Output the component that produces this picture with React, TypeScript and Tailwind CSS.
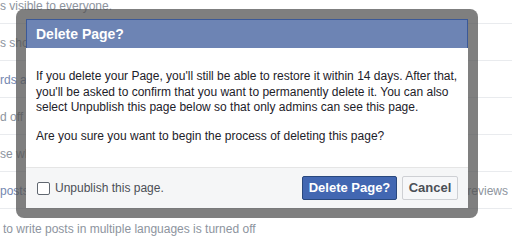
import { useState } from 'react'

const ROW_CLS = "flex h-[37px] shrink-0 items-center justify-between border-b border-[#e9ebee] pt-[2px]"

export default function App() {
  const [unpublish, setUnpublish] = useState(false)

  return (
    <div className="relative h-[241px] w-[512px] overflow-hidden bg-white font-['Liberation_Sans',Arial,sans-serif] text-[12px]">
      {/* settings list behind the dialog */}
      <div className="mt-[-13px] flex flex-col">
        <div className={ROW_CLS}>
          <span className="text-[#8d949e]">s visible to everyone.</span>
        </div>
        <div className={ROW_CLS}>
          <span className="text-[#8d949e]">s shown</span>
        </div>
        <div className={ROW_CLS}>
          <span className="text-[#7487b0]">rds and</span>
        </div>
        <div className={ROW_CLS}>
          <span className="text-[#8d949e]">d off</span>
        </div>
        <div className={ROW_CLS}>
          <span className="text-[#8d949e]">se who</span>
        </div>
        <div className={ROW_CLS}>
          <span className="text-[#7487b0]">posts</span>
          <span className="mr-[4px] text-[#8d949e]">reviews</span>
        </div>
        <div className="flex h-[37px] items-center pl-[3px] pt-[2px]">
          <span className="text-[#8d949e]">to write posts in multiple languages is turned off</span>
        </div>
      </div>

      {/* dialog */}
      <div className="absolute left-[16px] top-[9px] w-[462px] rounded-[8px] bg-[rgba(82,82,82,0.74)] p-[10px]">
        <div className="flex flex-col bg-white">
          <div className="flex h-[29px] items-center border border-b-0 border-[#3b5998] bg-[#6d84b4] px-[9px] text-[14px] font-bold text-white">
            Delete Page?
          </div>
          <div className="border-b border-[#e5e5e5] px-[10px] pb-[23px] pt-[21px] leading-[15.5px] text-[#1d2129]">
            <p className="mb-[13px]">
              If you delete your Page, you'll still be able to restore it within 14 days. After that, you'll be asked to
              confirm that you want to permanently delete it. You can also select Unpublish this page below so that only
              admins can see this page.
            </p>
            <p>Are you sure you want to begin the process of deleting this page?</p>
          </div>
          <div className="flex h-[40px] items-center justify-between bg-[#f5f6f7] pl-[11px] pr-[10px]">
            <label className="flex cursor-pointer items-center gap-[5px] text-[#4b4f56]">
              <span
                onClick={() => setUnpublish(!unpublish)}
                className="flex h-[13px] w-[13px] items-center justify-center rounded-[2px] border border-[#606770] bg-white"
              >
                {unpublish && <span className="h-[7px] w-[7px] bg-[#4267b2]" />}
              </span>
              Unpublish this page.
            </label>
            <div className="flex items-center gap-[5px]">
              <button className="flex h-[24px] w-[95px] items-center justify-center rounded-[2px] border border-[#29487d] bg-[#4267b2] text-[13px] font-bold text-white">
                Delete Page?
              </button>
              <button className="flex h-[24px] w-[56px] items-center justify-center rounded-[2px] border border-[#ced0d4] bg-[#f6f7f9] text-[13px] font-bold text-[#4b4f56]">
                Cancel
              </button>
            </div>
          </div>
        </div>
      </div>
    </div>
  )
}
